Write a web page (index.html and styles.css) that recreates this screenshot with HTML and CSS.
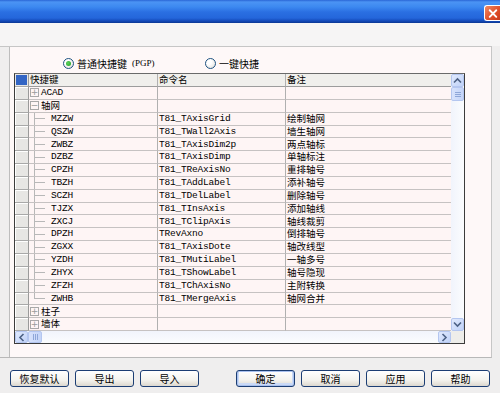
FILE: index.html
```html
<!DOCTYPE html>
<html lang="zh-CN">
<head>
    <meta charset="UTF-8">
    <title>快捷键设置</title>
    <link rel="stylesheet" href="styles.css">
</head>
<body>
<div class="window">
    <div class="titlebar">
        <span class="close">
            <svg width="17" height="16" viewBox="0 0 17 16"><path d="M5 4 L12 11 M12 4 L5 11" stroke="#fff" stroke-width="2" stroke-linecap="round"/></svg>
        </span>
    </div>
    <div class="topband"></div>

    <div class="main">
        <div class="leftstrip"></div>
        <div class="panel">
            <div class="modes">
                <label class="radio first"><span class="dot on"></span>普通快捷键 <small>(PGP)</small></label>
                <label class="radio"><span class="dot"></span>一键快捷</label>
            </div>

            <div class="table">
                <div class="body">
                    <div class="cells">
                        <div class="row head">
                            <div class="rh"><span class="corner-mark"></span></div>
                            <div class="c">快捷键</div>
                            <div class="c">命令名</div>
                            <div class="c">备注</div>
                        </div>
                        <div class="rows">
                            <div class="row">
                                <div class="rh"></div>
                                <div class="c"><span class="box">+</span><span class="en">ACAD</span></div>
                                <div class="c"></div>
                                <div class="c"></div>
                            </div>
                            <div class="row">
                                <div class="rh"></div>
                                <div class="c"><span class="box">−</span>轴网</div>
                                <div class="c"></div>
                                <div class="c"></div>
                            </div>
                            <div class="row"><div class="rh"></div><div class="c"><span class="elbow"></span><span class="en key">MZZW</span></div><div class="c en">T81_TAxisGrid</div><div class="c">绘制轴网</div></div>
                            <div class="row"><div class="rh"></div><div class="c"><span class="elbow"></span><span class="en key">QSZW</span></div><div class="c en">T81_TWall2Axis</div><div class="c">墙生轴网</div></div>
                            <div class="row"><div class="rh"></div><div class="c"><span class="elbow"></span><span class="en key">ZWBZ</span></div><div class="c en">T81_TAxisDim2p</div><div class="c">两点轴标</div></div>
                            <div class="row"><div class="rh"></div><div class="c"><span class="elbow"></span><span class="en key">DZBZ</span></div><div class="c en">T81_TAxisDimp</div><div class="c">单轴标注</div></div>
                            <div class="row"><div class="rh"></div><div class="c"><span class="elbow"></span><span class="en key">CPZH</span></div><div class="c en">T81_TReAxisNo</div><div class="c">重排轴号</div></div>
                            <div class="row"><div class="rh"></div><div class="c"><span class="elbow"></span><span class="en key">TBZH</span></div><div class="c en">T81_TAddLabel</div><div class="c">添补轴号</div></div>
                            <div class="row"><div class="rh"></div><div class="c"><span class="elbow"></span><span class="en key">SCZH</span></div><div class="c en">T81_TDelLabel</div><div class="c">删除轴号</div></div>
                            <div class="row"><div class="rh"></div><div class="c"><span class="elbow"></span><span class="en key">TJZX</span></div><div class="c en">T81_TInsAxis</div><div class="c">添加轴线</div></div>
                            <div class="row"><div class="rh"></div><div class="c"><span class="elbow"></span><span class="en key">ZXCJ</span></div><div class="c en">T81_TClipAxis</div><div class="c">轴线裁剪</div></div>
                            <div class="row"><div class="rh"></div><div class="c"><span class="elbow"></span><span class="en key">DPZH</span></div><div class="c en">TRevAxno</div><div class="c">倒排轴号</div></div>
                            <div class="row"><div class="rh"></div><div class="c"><span class="elbow"></span><span class="en key">ZGXX</span></div><div class="c en">T81_TAxisDote</div><div class="c">轴改线型</div></div>
                            <div class="row"><div class="rh"></div><div class="c"><span class="elbow"></span><span class="en key">YZDH</span></div><div class="c en">T81_TMutiLabel</div><div class="c">一轴多号</div></div>
                            <div class="row"><div class="rh"></div><div class="c"><span class="elbow"></span><span class="en key">ZHYX</span></div><div class="c en">T81_TShowLabel</div><div class="c">轴号隐现</div></div>
                            <div class="row"><div class="rh"></div><div class="c"><span class="elbow"></span><span class="en key">ZFZH</span></div><div class="c en">T81_TChAxisNo</div><div class="c">主附转换</div></div>
                            <div class="row"><div class="rh"></div><div class="c"><span class="elbow last"></span><span class="en key">ZWHB</span></div><div class="c en">T81_TMergeAxis</div><div class="c">轴网合并</div></div>
                            <div class="row">
                                <div class="rh"></div>
                                <div class="c"><span class="box">+</span>柱子</div>
                                <div class="c"></div>
                                <div class="c"></div>
                            </div>
                            <div class="row">
                                <div class="rh"></div>
                                <div class="c"><span class="box">+</span>墙体</div>
                                <div class="c"></div>
                                <div class="c"></div>
                            </div>
                        </div>
                    </div>

                    <div class="vscroll">
                        <span class="sbtn"><svg width="9" height="7" viewBox="0 0 9 7"><path d="M1 5.5 L4.5 2 L8 5.5" fill="none" stroke="#4d6185" stroke-width="1.6"/></svg></span>
                        <span class="thumb v"><i></i><i></i><i></i></span>
                        <span class="track"></span>
                        <span class="sbtn"><svg width="9" height="7" viewBox="0 0 9 7"><path d="M1 1.5 L4.5 5 L8 1.5" fill="none" stroke="#4d6185" stroke-width="1.6"/></svg></span>
                    </div>
                </div>
                <div class="hbar">
                    <div class="hscroll">
                        <span class="sbtn"><svg width="7" height="9" viewBox="0 0 7 9"><path d="M5.5 1 L2 4.5 L5.5 8" fill="none" stroke="#4d6185" stroke-width="1.6"/></svg></span>
                        <span class="thumb h"><i></i><i></i><i></i></span>
                        <span class="track"></span>
                        <span class="sbtn"><svg width="7" height="9" viewBox="0 0 7 9"><path d="M1.5 1 L5 4.5 L1.5 8" fill="none" stroke="#4d6185" stroke-width="1.6"/></svg></span>
                    </div>
                    <div class="corner"></div>
                </div>
            </div>
        </div>
    </div>

    <div class="buttons">
        <button class="btn">恢复默认</button>
        <button class="btn">导出</button>
        <button class="btn">导入</button>
        <button class="btn default gap">确定</button>
        <button class="btn">取消</button>
        <button class="btn">应用</button>
        <button class="btn">帮助</button>
    </div>
</div>
</body>
</html>
```

FILE: styles.css
```css
body {
    margin: 0;
    font-family: "Noto Sans CJK SC", "DejaVu Sans", sans-serif;
    font-size: 10px;
    color: #000;
    background-color: #efeeee;
}

.window {
    width: 500px;
    height: 393px;
    overflow: hidden;
    background-color: #efeeee;
}

/* XP style caption */
.titlebar {
    height: 23px;
    display: flex;
    justify-content: flex-end;
    align-items: flex-start;
    background: linear-gradient(#2a66d6 0, #4b94f4 2px, #3c88f0 7px, #2a6fe2 12px, #2466db 18px, #1349b8 21px, #0a3792 23px);
}

.close {
    width: 17px;
    height: 16px;
    margin-top: 5px;
    margin-right: -1px;
    border: 1px solid #fff;
    border-right: none;
    border-radius: 3px 0 0 3px;
    background: linear-gradient(135deg, #f08a64, #e0502a 55%, #c8381a);
    box-sizing: border-box;
    display: flex;
}

.topband {
    height: 23px;
    background-color: #f6f5f5;
}

.main {
    width: 492px;
    height: 312px;
    box-sizing: border-box;
    display: flex;
    border-top: 1px solid #c6c6c6;
    border-right: 1px solid #c6c6c6;
    border-bottom: 1px solid #b8b8b8;
}

.leftstrip {
    width: 10px;
    box-sizing: border-box;
    border-right: 1px solid #bdbdbd;
    background-color: #efeeee;
}

.panel {
    flex: 1;
    background-color: #fef8f8;
    padding-left: 4px;
}

.modes {
    height: 26px;
    box-sizing: border-box;
    padding-top: 6px;
    padding-left: 49px;
    display: flex;
    align-items: center;
}

.radio {
    display: flex;
    align-items: center;
    gap: 3px;
    font-size: 10px;
    white-space: nowrap;
}

.radio.first {
    width: 142px;
}

.radio small {
    font-family: "Liberation Serif", serif;
    font-size: 9px;
    margin-left: 2px;
}

.dot {
    width: 11px;
    height: 11px;
    box-sizing: border-box;
    border: 1px solid #1d5281;
    border-radius: 50%;
    background: radial-gradient(circle at 35% 35%, #fff 30%, #dcdad3);
    display: flex;
    align-items: center;
    justify-content: center;
}

.dot.on::after {
    content: "";
    width: 5px;
    height: 5px;
    border-radius: 50%;
    background: radial-gradient(circle at 40% 40%, #5fd15f, #1e9e1e);
}

/* grid */
.table {
    width: 451px;
    height: 271px;
    box-sizing: border-box;
    border: 1px solid #3c3c3c;
    border-top-color: #6a6a6a;
    background-color: #fef5f5;
}

.body {
    height: 257px;
    display: flex;
}

.cells {
    width: 436px;
    height: 257px;
    display: flex;
    flex-direction: column;
}

.rows {
    flex: 1;
    min-height: 0;
    overflow: hidden;
    display: flex;
    flex-direction: column;
}

.row {
    flex: none;
    height: 12.85px;
    display: grid;
    grid-template-columns: 14px 129px 128px 165px;
}

.row.head {
    height: 13px;
    background-color: #f0efec;
}

.c {
    display: flex;
    align-items: center;
    padding-left: 1px;
    box-sizing: border-box;
    border-right: 1px solid #b0b0b0;
    border-bottom: 1px solid #c6c2c2;
    white-space: nowrap;
    font-size: 9.5px;
    line-height: 1;
}

.c:last-child {
    border-right: none;
}

.head .c {
    border-bottom-color: #9c9c9c;
}

.rh {
    box-sizing: border-box;
    border-right: 1px solid #9a9a9a;
    border-bottom: 1px solid #a8a8a8;
    background-color: #e7e6e4;
    box-shadow: inset 1px 1px 0 #fff;
}

.head .rh {
    padding: 1px;
    box-shadow: none;
}

.corner-mark {
    display: block;
    width: 100%;
    height: 100%;
    background-color: #3365c4;
}

.en {
    font-family: "Liberation Mono", monospace;
    font-size: 9.5px;
    letter-spacing: -0.2px;
}

.box {
    flex: none;
    width: 9px;
    height: 9px;
    box-sizing: border-box;
    margin-right: 2px;
    border: 1px solid #a8a8a8;
    color: #9a9a9a;
    font-family: "DejaVu Sans", sans-serif;
    font-size: 9px;
    line-height: 6px;
    text-align: center;
    display: flex;
    justify-content: center;
}

.elbow {
    align-self: stretch;
    width: 11px;
    margin-left: 4px;
    margin-right: 6px;
    background:
        linear-gradient(#b8b8b8, #b8b8b8) 0 0 / 1px 100% no-repeat,
        linear-gradient(#b8b8b8, #b8b8b8) 0 50% / 11px 1px no-repeat;
}

.elbow.last {
    background:
        linear-gradient(#b8b8b8, #b8b8b8) 0 0 / 1px 50% no-repeat,
        linear-gradient(#b8b8b8, #b8b8b8) 0 50% / 11px 1px no-repeat;
}

/* scrollbars */
.vscroll {
    width: 13px;
    display: flex;
    flex-direction: column;
    background: linear-gradient(90deg, #f1f4fc, #fbfcfe);
}

.sbtn {
    flex: none;
    width: 13px;
    height: 13px;
    box-sizing: border-box;
    border: 1px solid #b4c6f0;
    border-radius: 2px;
    background: linear-gradient(135deg, #e0e9fd, #c0d2f8);
    display: flex;
    align-items: center;
    justify-content: center;
}

.thumb {
    flex: none;
    box-sizing: border-box;
    border: 1px solid #b4c6f0;
    border-radius: 2px;
    background: linear-gradient(90deg, #d7e2fc, #c4d4f8);
    display: flex;
    align-items: center;
    justify-content: center;
    gap: 1px;
}

.thumb.v {
    width: 13px;
    height: 14px;
    flex-direction: column;
}

.thumb.v i {
    display: block;
    width: 6px;
    height: 1px;
    background-color: #8ea6d8;
}

.thumb.h {
    width: 14px;
    height: 12px;
}

.thumb.h i {
    display: block;
    width: 1px;
    height: 6px;
    background-color: #8ea6d8;
}

.track {
    flex: 1;
}

.hbar {
    height: 12px;
    display: flex;
}

.hscroll {
    width: 436px;
    display: flex;
    background: linear-gradient(#f1f4fc, #fbfcfe);
}

.hscroll .sbtn {
    height: 12px;
}

.corner {
    flex: 1;
    background-color: #eeedea;
}

/* bottom buttons */
.buttons {
    display: flex;
    gap: 6px;
    padding: 12px 0 0 10px;
}

.btn {
    width: 59px;
    height: 17px;
    padding: 0;
    border: 1px solid #1c3e74;
    border-radius: 3px;
    background: linear-gradient(#ffffff, #f4f3ee 60%, #dcd8cf);
    font-family: "Noto Sans CJK SC", sans-serif;
    font-size: 10px;
    line-height: 14px;
    color: #000;
}

.btn.default {
    box-shadow: inset 0 0 0 1px #a9c1ee, inset 0 -1px 0 2px #cbdaf6;
}

.btn.gap {
    margin-left: 31px;
}
```
